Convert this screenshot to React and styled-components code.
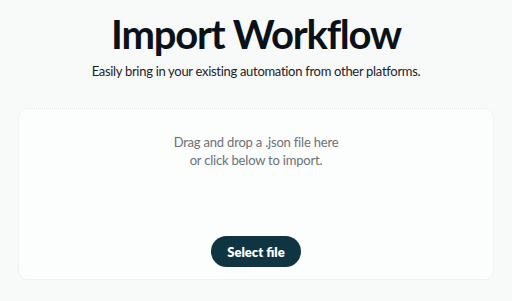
import React from "react";
import styled, { createGlobalStyle } from "styled-components";

const GlobalStyle = createGlobalStyle`
  html, body {
    margin: 0;
    padding: 0;
    background: #f8fafa;
    font-family: "Lato", "Noto Sans", sans-serif;
  }
`;

const Page = styled.div`
  width: 512px;
  height: 301px;
  display: flex;
  flex-direction: column;
  align-items: center;
  box-sizing: border-box;
  padding: 11px 18px 0;
`;

const Title = styled.h1`
  margin: 0;
  font-size: 40px;
  line-height: 46px;
  font-weight: 700;
  color: #0b1118;
  letter-spacing: -1.2px;
`;

const Subtitle = styled.p`
  margin: 5px 0 0;
  font-size: 13px;
  line-height: 18px;
  color: #1c2229;
  letter-spacing: -0.3px;
`;

const DropZone = styled.div`
  margin-top: 28px;
  width: 100%;
  height: 172px;
  box-sizing: border-box;
  border: 1px dotted #e2e6e8;
  border-radius: 10px;
  background: #fcfdfd;
  display: flex;
  flex-direction: column;
  align-items: center;
  padding-top: 24px;
`;

const Hint = styled.p`
  margin: 0;
  font-size: 13px;
  line-height: 18px;
  color: #6b7178;
  text-align: center;
  letter-spacing: -0.2px;
`;

const Button = styled.button`
  margin-top: auto;
  margin-bottom: 12px;
  width: 90px;
  height: 31px;
  border: none;
  border-radius: 16px;
  background: #0e3541;
  color: #fff;
  font-family: inherit;
  font-size: 13px;
  font-weight: 800;
  cursor: pointer;
`;

export default function App() {
  return (
    <>
      <GlobalStyle />
      <Page>
        <Title>Import Workflow</Title>
        <Subtitle>Easily bring in your existing automation from other platforms.</Subtitle>
        <DropZone>
          <Hint>
            Drag and drop a .json file here
            <br />
            or click below to import.
          </Hint>
          <Button>Select file</Button>
        </DropZone>
      </Page>
    </>
  );
}
